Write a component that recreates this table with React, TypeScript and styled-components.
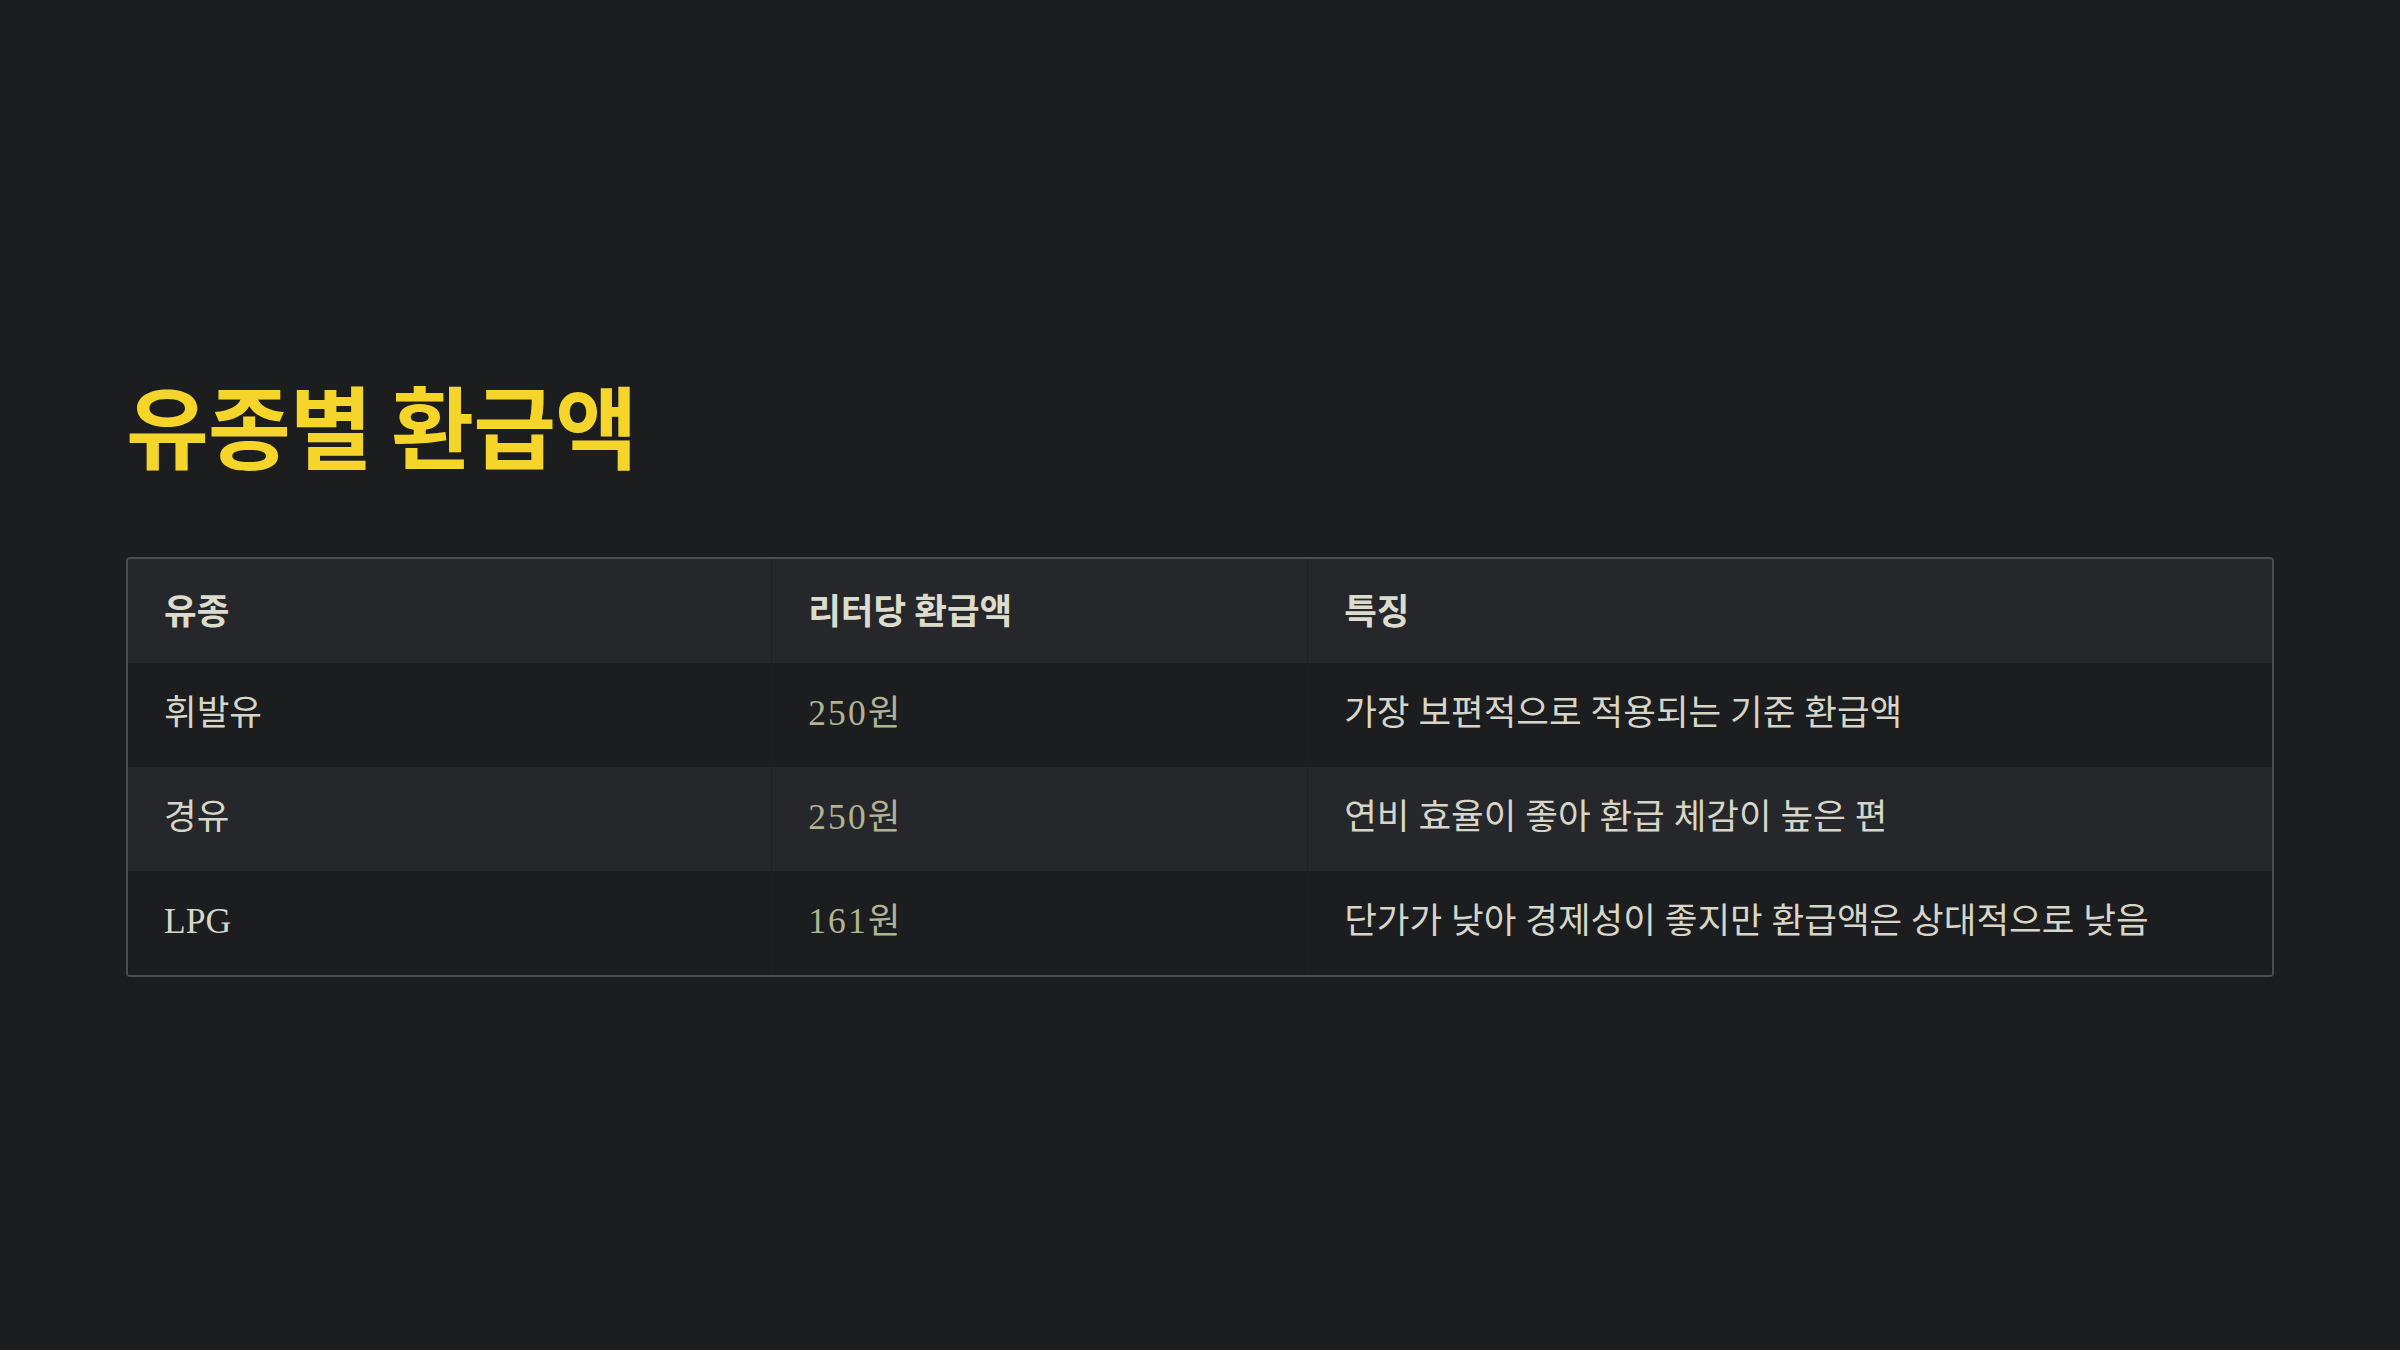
import styled, { createGlobalStyle } from "styled-components"

const GlobalStyle = createGlobalStyle`
	html, body {
		margin: 0;
		padding: 0;
		background: #1c1d1f;
	}

	body {
		font-family: "Noto Sans CJK KR", "Noto Sans", sans-serif;
	}
`

const rows = [
	{ fuel: "휘발유", amount: "250원", note: "가장 보편적으로 적용되는 기준 환급액" },
	{ fuel: "경유", amount: "250원", note: "연비 효율이 좋아 환급 체감이 높은 편" },
	{ fuel: "LPG", amount: "161원", note: "단가가 낮아 경제성이 좋지만 환급액은 상대적으로 낮음" },
]

const App = () => {
	return (
		<>
			<GlobalStyle />
			<Page>
				<Title>유종별 환급액</Title>

				<Table>
					<colgroup>
						<col style={{ width: "30%" }} />
						<col style={{ width: "25%" }} />
						<col style={{ width: "45%" }} />
					</colgroup>
					<thead>
						<HeadRow>
							<Th>유종</Th>
							<Th>리터당 환급액</Th>
							<Th>특징</Th>
						</HeadRow>
					</thead>
					<tbody>
						{rows.map((row, index) => (
							<Row key={index} $striped={index % 2 === 1}>
								<Td>{row.fuel}</Td>
								<Td $accent>{row.amount}</Td>
								<Td>{row.note}</Td>
							</Row>
						))}
					</tbody>
				</Table>
			</Page>
		</>
	)
}

export default App

const Page = styled.main`
	box-sizing: border-box;
	min-height: 100vh;
	padding: 0 126px 4px;
	display: flex;
	flex-direction: column;
	justify-content: center;
`

const Title = styled.h1`
	margin: 0 0 80px;
	font-size: 90px;
	font-weight: 700;
	line-height: 1.2;
	letter-spacing: -0.01em;
	color: #f6d52b;
`

const Table = styled.table`
	width: 100%;
	border-collapse: separate;
	border-spacing: 0;
	border: 2px solid #4c4d50;
	border-radius: 4px;
	overflow: hidden;
	table-layout: fixed;
`

const HeadRow = styled.tr`
	background: #26272a;
`

const Row = styled.tr<{ $striped: boolean }>`
	background: ${(p) => (p.$striped ? "#26272a" : "#1c1d1f")};
`

const Th = styled.th`
	box-sizing: border-box;
	height: 104px;
	padding: 0 36px 5px;
	text-align: left;
	vertical-align: middle;
	font-size: 35.5px;
	font-weight: 700;
	color: #dcdccd;
	border-left: 1px solid #1f2022;

	&:first-child {
		border-left: none;
	}
`

const Td = styled.td<{ $accent?: boolean }>`
	box-sizing: border-box;
	height: 104px;
	padding: 26px 36px 0;
	vertical-align: baseline;
	font-family: "Liberation Serif", "Noto Sans CJK KR", serif;
	font-size: 35.5px;
	line-height: 1.4;
	letter-spacing: ${(p) => (p.$accent ? "0.06em" : "0")};
	color: ${(p) => (p.$accent ? "#b1b392" : "#d6d6c8")};
	border-left: 1px solid #1f2022;

	&:first-child {
		border-left: none;
	}
`
